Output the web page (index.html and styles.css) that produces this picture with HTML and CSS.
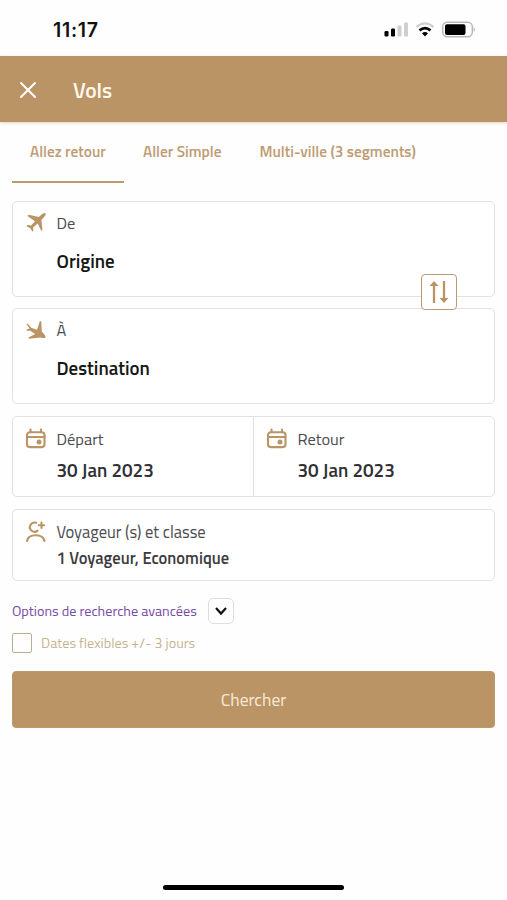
FILE: index.html
```
<!DOCTYPE html>
<html lang="fr">
<head>
<meta charset="utf-8">
<meta name="viewport" content="width=device-width, initial-scale=1">
<title>Vols</title>
<link rel="stylesheet" href="styles.css">
</head>
<body>
<div class="status">
  <span class="time">11:17</span>
  <svg class="status-icons" width="92" height="18" viewBox="0 0 92 18">
    <rect x="0.5" y="10" width="4" height="5.5" rx="1.3"/>
    <rect x="7" y="7.5" width="4" height="8" rx="1.3"/>
    <g fill="#cfcfcf"><rect x="13.5" y="4.5" width="4" height="11" rx="1.3"/><rect x="20" y="1.5" width="4" height="14" rx="1.3"/></g>
    <g fill="none" stroke-width="2.3"><path d="M32.5 6Q41 -1.2 49.5 6" stroke="#cfcfcf"/><path d="M35.5 9.4Q41 4.8 46.5 9.4" stroke="#000" stroke-width="2.7"/></g>
    <path d="M38 12.2Q41 9.9 44 12.2L41 15.6Z"/>
    <rect x="58.7" y="1.2" width="29.6" height="14.6" rx="4.5" fill="#fff" stroke="#b8b8b8" stroke-width="1.5"/>
    <rect x="61" y="3.2" width="20.5" height="10.8" rx="2"/>
    <path d="M89.7 6.2Q92 8.5 89.7 10.8Z" fill="#aaa"/>
  </svg>
</div>
<header class="bar">
  <svg width="18" height="18" viewBox="0 0 18 18" class="line"><path d="M2 2L16 16M16 2L2 16" stroke="#fff" stroke-width="2"/></svg>
  <h1>Vols</h1>
</header>
<nav class="tabs">
  <a class="tab active">Allez retour</a>
  <a class="tab second">Aller Simple</a>
  <a class="tab third">Multi-ville (3 segments)</a>
</nav>
<main>
  <section class="card place from">
    <svg class="icon" width="22" height="22" viewBox="0 0 22 22"><path d="M20.5 1.2C21.2 2 20.3 3.5 19.3 4.7L16.4 7.9L17.4 17.6L16.4 19L12.7 11.6L8.1 15.4L8.4 18.9L7.3 19.6L5.3 16.3L1.5 14.2L2.5 13.1L6.1 13.4L10 9.2L2.4 4L3.7 2.8L13.8 5L17.2 2.1C18.4 1 19.8 .5 20.5 1.2Z"/></svg>
    <div><div class="label">De</div><div class="value">Origine</div></div>
    <button class="swap"><svg width="22" height="26" viewBox="0 0 22 26"><path d="M6 24V4M16 2V22" stroke-width="2.3"/><path d="M1.5 7L6 2L10.5 7ZM11.5 19L16 24L20.5 19Z" stroke="none" fill="#bb9465"/></svg></button>
  </section>
  <section class="card place">
    <svg class="icon low" width="22" height="22" viewBox="0 0 22 22"><path d="M1.4 3.9L2.8 3.7L6.2 7.7L12 9.8L14.8 1.2H16.3L16.8 11.4L19.2 14.3C20.4 15.6 20.9 17.3 20.2 17.7C19.2 18.4 17.2 18 15.8 17.4L3.9 18.8L3.5 17.6L10.2 14L5.3 10.7L1.9 10.7L1.3 9.7L4.6 8.5Z"/></svg>
    <div><div class="label">À</div><div class="value">Destination</div></div>
  </section>
  <section class="card dates">
    <div class="date">
      <svg class="icon line low" width="22" height="22" viewBox="0 0 22 22"><rect x="2" y="4.3" width="17.5" height="14.8" rx="2.8"/><path d="M2 9H19.5M5.5 1.5V4M16 1.5V4"/><circle cx="14" cy="14" r="2.5" fill="#bb9465" stroke="none"/></svg>
      <div><div class="label">Départ</div><div class="day">30 Jan 2023</div></div>
    </div>
    <div class="date">
      <svg class="icon line low" width="22" height="22" viewBox="0 0 22 22"><rect x="2" y="4.3" width="17.5" height="14.8" rx="2.8"/><path d="M2 9H19.5M5.5 1.5V4M16 1.5V4"/><circle cx="14" cy="14" r="2.5" fill="#bb9465" stroke="none"/></svg>
      <div><div class="label">Retour</div><div class="day">30 Jan 2023</div></div>
    </div>
  </section>
  <section class="card travellers">
    <svg class="icon line" width="22" height="24" viewBox="0 0 22 24"><path d="M11 2.8A4.6 4.6 0 1 0 12.6 10.6M2 21Q3 15.3 10.7 15.3T19.5 21M13.8 5.2H19.2M16.5 2.5V7.9"/></svg>
    <div><div class="label who">Voyageur (s) et classe</div><div class="summary">1 Voyageur, Economique</div></div>
  </section>
  <div class="advanced">
    <a>Options de recherche avancées</a>
    <button class="toggle"><svg width="14" height="10" viewBox="0 0 14 10"><path d="M2 2L7 7.5L12 2"/></svg></button>
  </div>
  <label class="flex-dates"><span class="box"></span><span>Dates flexibles +/- 3 jours</span></label>
  <button class="search">Chercher</button>
</main>
<div class="home"></div>
</body>
</html>
```
FILE: styles.css
```
* { box-sizing: border-box; }
body { margin: 0; width: 507px; height: 900px; display: flex; flex-direction: column; background: #fefefe; color: #4c4c4f; font: 16.4px/20px "Titillium Web", "Open Sans", sans-serif; overflow: hidden; }
button { font: inherit; padding: 0; }
.status { height: 56px; display: flex; justify-content: space-between; padding: 20px 31px 0 53px; }
.time { font: 600 19.5px/20px Inter, sans-serif; color: #111; letter-spacing: .7px; }
.status-icons { margin-top: 1px; }
.bar { height: 66px; background: #bb9465; display: flex; align-items: center; gap: 36px; padding: 2px 19px 0; box-shadow: 0 1px 3px #bb946566; }
h1 { margin: 0; font-size: 21.6px; line-height: 28px; font-weight: 600; color: #fff8ed; }
.tabs { height: 61px; display: flex; padding: 0 12px; color: #bf9c75; font-size: 15.35px; font-weight: 600; white-space: nowrap; }
.tab { padding-top: 20px; }
.active { width: 112px; padding-left: 18px; border-bottom: 2px solid #bb9b70; }
.second { width: 117px; padding-left: 19px; }
.third { padding-left: 18.5px; }
main { padding: 18px 12px 0; white-space: nowrap; }
.card { border: 1.5px solid #e2e2e2; border-radius: 5px; background: #fff; display: flex; margin-bottom: 12px; }
.icon { margin: 10px 10px 0 11.5px; flex: none; fill: #bb9465; }
.low { margin-top: 11px; }
.line { fill: none; stroke: #bb9465; stroke-width: 2.1; stroke-linecap: round; }
.place { height: 96px; position: relative; }
.from { margin-bottom: 11px; }
.label { margin-top: 12px; }
.place .label { margin-top: 11px; }
.value { margin-top: 16px; line-height: 24px; font-size: 18.9px; font-weight: 600; color: #171717; }
.swap { position: absolute; right: 37px; bottom: -14px; width: 36px; height: 36px; border: 1.5px solid #bb9b76; border-radius: 4px; background: #fff; display: grid; place-items: center; z-index: 1; }
.swap svg { fill: none; stroke: #bb9465; }
.dates { height: 81px; }
.date { flex: 1; display: flex; }
.date + .date { border-left: 1px solid #e0e0e0; }
.day { margin-top: 9px; line-height: 24px; font-size: 18.9px; font-weight: 600; color: #303034; }
.travellers { height: 72px; }
.who { font-size: 16.5px; }
.summary { margin-top: 5px; line-height: 22px; font-size: 16.5px; font-weight: 600; color: #3c3c40; }
.advanced { height: 28px; margin-top: 16px; display: flex; align-items: center; gap: 11px; color: #784ba5; font-size: 14.2px; }
.toggle { width: 26px; height: 26px; border: 1.5px solid #ddd; border-radius: 5px; background: #fff; display: grid; place-items: center; }
.toggle svg { fill: none; stroke: #111; stroke-width: 2.2; }
.flex-dates { height: 20px; margin-top: 8px; display: flex; align-items: center; gap: 9px; color: #c6b493; font-size: 14.2px; }
.box { width: 20px; height: 20px; border: 1.5px solid #bdae91; border-radius: 2px; }
.search { width: 483px; height: 57px; margin-top: 18px; padding-top: 1px; border: 1px solid #bd9a6e; border-radius: 4px; background: #bb9465; color: #f9ead8; font-size: 17.5px; }
.home { width: 181px; height: 5px; border-radius: 3px; background: #000; margin: auto auto 10px 163px; }
```
